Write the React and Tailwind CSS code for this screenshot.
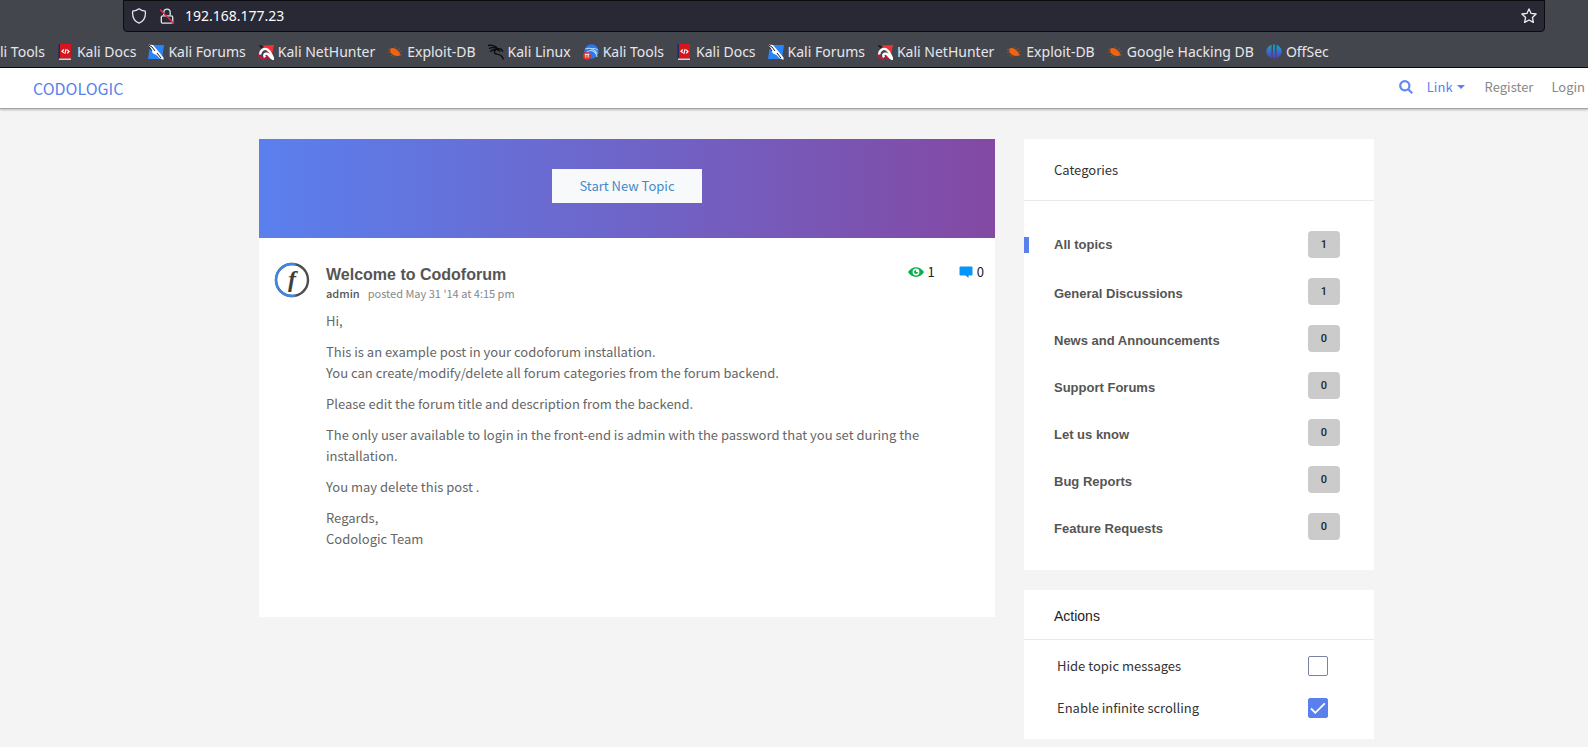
import React from 'react';

const bookmarks = [
  { label: 'Kali Docs', icon: 'docs' },
  { label: 'Kali Forums', icon: 'forums' },
  { label: 'Kali NetHunter', icon: 'nethunter' },
  { label: 'Exploit-DB', icon: 'exploit' },
  { label: 'Kali Linux', icon: 'linux' },
  { label: 'Kali Tools', icon: 'tools' },
  { label: 'Kali Docs', icon: 'docs' },
  { label: 'Kali Forums', icon: 'forums' },
  { label: 'Kali NetHunter', icon: 'nethunter' },
  { label: 'Exploit-DB', icon: 'exploit' },
  { label: 'Google Hacking DB', icon: 'exploit' },
  { label: 'OffSec', icon: 'offsec' },
];

const categories = [
  { name: 'General Discussions', count: 1 },
  { name: 'News and Announcements', count: 0 },
  { name: 'Support Forums', count: 0 },
  { name: 'Let us know', count: 0 },
  { name: 'Bug Reports', count: 0 },
  { name: 'Feature Requests', count: 0 },
];

const icons = {
  docs: (
    <>
      <path d="M1.500 0h2.500v14.500H1.500z" fill="#1b2a63" />
      <path d="M3 0h11v14.500H3z" fill="#d9141b" />
      <path d="M2 14.500h12V16H2z" fill="#e6c9c9" />
      <path d="M6.800 5.500 5 7.200l1.800 1.600M10.200 5.800l1.800 1.700-1.800 1.800M9.200 5 7.800 9.800" stroke="#fff" strokeWidth="1.200" fill="none" />
    </>
  ),
  forums: (
    <>
      <path d="M5 1h11l-2 14H0L1.500 5z" fill="#2b84f7" />
      <path d="M0 0.500 5 1l6 7 4.500 5.500V16l-4-2L8.500 11 5 9.500z" fill="#fff" />
      <path d="M0 0.500 4 3l3 4M1 2.500 4 7M9 9l4 5" stroke="#1c1c22" strokeWidth="1" fill="none" />
    </>
  ),
  nethunter: (
    <>
      <path d="M5 1.500 16 1l-2.500 12L8 6z" fill="#ef3236" />
      <path d="M0.500 1 5 2 3.500 4.500z" fill="#1c1418" />
      <path d="M0.500 9c.5 3.500 3 6 7 6.300M8.500 11.500l3 3.500" fill="none" stroke="#c8143f" strokeWidth="2.200" />
      <path d="M2.500 10.500C1.500 7 6 3.500 9.500 5.500c3 1.800 3.500 5 6 9.500-3.500-.8-4-4.800-6.500-5.300-2.200-.4-3.500 1.300-2 3.600" fill="none" stroke="#fff" strokeWidth="2.400" />
    </>
  ),
  exploit: (
    <>
      <path d="M3.500 4.500C6 3 9 4.500 11 7c1.500 1.500 2.500 2.500 2.500 4.500-3 1-6.500.5-8.500-1.500-1.800-1.600-2.500-3.500-1.500-5.500z" fill="#f0640f" />
      <path d="M1 5.500h3M1 8.500l3-.5M3 12l3-1.500M6 13l2-2M7 4.500 9 3M10 6l3-1.500M12 8l3-1M12.500 10.500l2.500.5" stroke="#a5501e" strokeWidth="0.800" fill="none" />
    </>
  ),
  linux: (
    <path
      d="M0 1.500c4-1 7 .5 9.500 2.500M1 4.500c3-1.500 6-.8 8.500.5M2 7.500c2-1.500 4-2 7-2l3.500 2M9 5.500c-3.500 1.500-3.500 4 0 4.700 3.500.6 5.500 1.500 6.500 5.300M9.500 4.500 13 5l2 2.500"
      stroke="#0b0b0e"
      strokeWidth="1.300"
      fill="none"
    />
  ),
  tools: (
    <>
      <circle cx="8.500" cy="7.500" r="7.200" fill="#2779f3" />
      <path d="M2.500 5C7 3 11 5 14.500 9.500M4 8c3-2.200 6-1.500 8 .5 1.500 1.500 2 3 2 4.500M8 5c3-1 5-.5 6.500 1" stroke="#b9d8ff" strokeWidth="1.100" fill="none" />
      <circle cx="4" cy="11.800" r="3.900" fill="#e8342c" />
      <path d="M2.800 10v3.600M5.200 10v3.600M1.800 10.300h4.600" stroke="#fff" strokeWidth="0.900" fill="none" />
    </>
  ),
  offsec: (
    <>
      <defs>
        <linearGradient id="offsec" x1="0" y1="0" x2="0" y2="1">
          <stop offset="0" stopColor="#16a6c4" />
          <stop offset="1" stopColor="#5a2fd0" />
        </linearGradient>
      </defs>
      <path d="M5.500 0.800v13.400C-1.500 11-1.500 4 5.500 0.800zM10.500 0.800v13.400C17.500 11 17.500 4 10.500 0.800zM7.200 0.500h1.600l.7 12L8 16l-1.500-3.500z" fill="url(#offsec)" />
    </>
  ),
};

const Bookmark = ({ label, icon }) => (
  <a href="#" className="flex shrink-0 items-center gap-1 whitespace-nowrap">
    <svg viewBox="0 0 16 16" className="h-4 w-4 shrink-0">
      {icons[icon]}
    </svg>
    {label}
  </a>
);

const BrowserBar = () => (
  <div className="border-b border-[#0c0c0f] bg-[#44464e] font-['Noto_Sans',sans-serif] text-[#fbfbfe]">
    <div className="pl-[123px] pr-[43px]">
      <div className="flex h-8 items-center rounded-b border border-[#0c0c0f] bg-[#282934] px-[7px]">
        <svg viewBox="0 0 16 16" className="h-4 w-4" fill="none" stroke="#e4e4e9" strokeWidth="1.300">
          <path d="M8 0.800c1.800 1.500 4 2.200 6.300 2.400.6 5.500-1 9.800-6.300 12C2.700 13 1.100 8.700 1.700 3.200 4 3 6.200 2.300 8 0.800z" strokeLinejoin="round" />
        </svg>
        <svg viewBox="0 0 16 16" className="ml-3 h-4 w-4" fill="none" stroke="#e4e4e9" strokeWidth="1.300">
          <path d="M4.800 7V4.300a3.200 3.200 0 0 1 6.400 0V7" />
          <rect x="2.300" y="7.800" width="11.400" height="7.400" rx="1.500" />
          <path d="M1 1.500l14 14" stroke="#e22850" strokeWidth="1.400" />
        </svg>
        <input
          type="text"
          aria-label="Address"
          defaultValue="192.168.177.23"
          className="ml-2.5 min-w-0 flex-1 bg-transparent text-sm outline-none"
        />
        <button aria-label="Bookmark this page">
          <svg viewBox="0 0 16 16" className="h-4 w-4" fill="none" stroke="#f0f0f4" strokeWidth="1.300" strokeLinejoin="round">
            <path d="M8 0.900l2.100 4.500 5 .6-3.700 3.400 1 5L8 12l-4.400 2.400 1-5L.9 6l5-.6z" />
          </svg>
        </button>
      </div>
    </div>
    <nav className="flex h-[35px] items-center gap-3 overflow-hidden pt-1 text-sm text-[#e6e6ea]">
      <a href="#" className="shrink-0 whitespace-nowrap">li Tools</a>
      {bookmarks.map((b, i) => (
        <Bookmark key={i} {...b} />
      ))}
    </nav>
  </div>
);

const SiteHeader = () => (
  <header className="flex h-[41px] items-center border-b border-[#a6a6a6] bg-white pl-[33px] pr-[3px] shadow-[0_1px_2px_rgba(0,0,0,0.25)]">
    <a href="#" className="text-base text-[#5a80ee]">
      CODOLOGIC
    </a>
    <nav className="ml-auto flex items-center pb-0.5 text-[13px] text-[#888]">
      <button aria-label="Search" className="mr-3.5">
        <svg viewBox="0 0 14 14" className="h-3.5 w-3.5" fill="none" stroke="#6488ef" strokeWidth="2.200">
          <circle cx="5.800" cy="5.800" r="4.600" />
          <path d="M9 9l4.200 4.200" />
        </svg>
      </button>
      <button className="mr-5 flex items-center gap-1 text-[#5a80ee]">
        Link
        <svg viewBox="0 0 8 4" className="h-1 w-2" fill="#5a80ee">
          <path d="M0 0h8L4 4z" />
        </svg>
      </button>
      <a href="#" className="mr-[18px]">Register</a>
      <a href="#">Login</a>
    </nav>
  </header>
);

const Avatar = () => (
  <svg viewBox="0 0 36 36" className="h-9 w-9 shrink-0" role="img" aria-label="admin">
    <circle cx="18" cy="18" r="16" fill="#fff" stroke="#4d4d4f" strokeWidth="2.400" />
    <path d="M21.500 2.400A16 16 0 1 0 21.500 33.600" fill="none" stroke="#3f86e4" strokeWidth="2.400" />
    <text x="18" y="25" textAnchor="middle" fill="#3f3f41" className="font-['Liberation_Serif',serif] text-2xl font-bold italic">
      f
    </text>
  </svg>
);

const Topic = () => (
  <article className="flex items-start gap-4 pb-[68px] pl-[15px] pr-[11px] pt-6">
    <Avatar />
    <div className="min-w-0 flex-1">
      <div className="flex items-start">
        <h2 className="flex-1 pt-[3px] font-['Liberation_Sans',sans-serif] text-base leading-5 font-bold text-[#555]">
          Welcome to Codoforum
        </h2>
        <div className="flex items-center gap-6 text-[13px] leading-5 text-[#222]">
          <span className="flex items-center gap-1">
            <svg viewBox="0 0 16 10" className="h-2.5 w-4">
              <path d="M0 5C4-1.500 12-1.500 16 5 12 11.500 4 11.500 0 5z" fill="#07b04a" />
              <circle cx="8" cy="5" r="3.400" fill="#fff" />
              <circle cx="8" cy="5" r="2" fill="#07b04a" />
              <path d="M8 5V3h2v2z" fill="#fff" />
            </svg>
            1
          </span>
          <span className="flex items-center gap-1">
            <svg viewBox="0 0 14 12" className="h-3 w-3.5">
              <path d="M1.500 0.500h11a1 1 0 0 1 1 1v7a1 1 0 0 1-1 1H9.500V12L6.500 9.500h-5a1 1 0 0 1-1-1v-7a1 1 0 0 1 1-1z" fill="#0497f7" />
            </svg>
            0
          </span>
        </div>
      </div>
      <p className="flex gap-2 text-[11px] leading-4 text-[#888]">
        <a href="#" className="font-medium text-[#555]">admin</a>
        <span>posted May 31 '14 at 4:15 pm</span>
      </p>
      <div className="mt-[9px] mr-10 space-y-2.5 text-[13px] leading-[21px] text-[#666]">
        <p>Hi,</p>
        <p>
          This is an example post in your codoforum installation.
          <br />
          You can create/modify/delete all forum categories from the forum backend.
        </p>
        <p>Please edit the forum title and description from the backend.</p>
        <p>The only user available to login in the front-end is admin with the password that you set during the installation.</p>
        <p>You may delete this post .</p>
        <p>
          Regards,
          <br />
          Codologic Team
        </p>
      </div>
    </div>
  </article>
);

const Count = ({ children }) => (
  <span className="flex h-[27px] w-8 items-center justify-center rounded-sm bg-[#cbcbcb] pt-px font-[Roboto,sans-serif] text-[11px] font-medium text-[#222]">
    {children}
  </span>
);

const Categories = () => (
  <section className="bg-white pb-[30px]">
    <h3 className="border-b border-[#e9eaeb] px-[30px] py-5 text-[13px] leading-[21px] text-[#333]">Categories</h3>
    <ul className="space-y-5 pt-[30px] font-['Liberation_Sans',sans-serif] text-[13px] font-bold text-[#555]">
      <li className="flex items-center pr-[34px]">
        <span className="h-4 w-[5px] bg-[#5a80ee]" />
        <a href="#" className="flex-1 pl-[25px]">All topics</a>
        <Count>1</Count>
      </li>
      {categories.map((c) => (
        <li key={c.name} className="flex items-center pl-[30px] pr-[34px]">
          <a href="#" className="flex-1 pt-1">{c.name}</a>
          <Count>{c.count}</Count>
        </li>
      ))}
    </ul>
  </section>
);

const Toggle = ({ id, label, checked }) => (
  <div className="flex items-center justify-between">
    <label htmlFor={id}>{label}</label>
    <span className="relative h-5 w-5">
      <input
        id={id}
        type="checkbox"
        defaultChecked={checked}
        className="peer block h-5 w-5 appearance-none rounded-xs border border-[#7b80a5] bg-white checked:border-[#5a80ee] checked:bg-[#5a80ee]"
      />
      <svg viewBox="0 0 20 20" className="pointer-events-none absolute inset-0 hidden h-5 w-5 peer-checked:block" fill="none" stroke="#fff" strokeWidth="1.800">
        <path d="M3 10.500l4.300 4.300L16.800 5.300" />
      </svg>
    </span>
  </div>
);

const Actions = () => (
  <section className="bg-white pb-[21px]">
    <h3 className="border-b border-[#e9eaeb] px-[30px] pt-4 pb-3 font-['Liberation_Sans',sans-serif] text-sm leading-[21px] text-[#222]">
      Actions
    </h3>
    <div className="space-y-[22px] pl-[33px] pr-[46px] pt-4 text-[13px] leading-5 text-[#333]">
      <Toggle id="hide-messages" label="Hide topic messages" />
      <Toggle id="infinite-scroll" label="Enable infinite scrolling" checked />
    </div>
  </section>
);

const App = () => {
  return (
    <div className="min-h-screen overflow-hidden bg-[#f4f4f4] font-['Noto_Sans_CJK_SC',sans-serif]">
      <BrowserBar />
      <SiteHeader />
      <div className="flex items-start gap-[29px] pl-[259px] pr-[214px] pt-[30px] pb-2">
        <main className="min-w-0 flex-1 bg-white">
          <div className="flex justify-center bg-linear-to-r/srgb from-[#5a80ee] to-[#8349a3] pt-[30px] pb-[35px]">
            <button className="h-[34px] w-[150px] bg-[#f8f9fb] text-[13px] text-[#428bca]">Start New Topic</button>
          </div>
          <Topic />
        </main>
        <aside className="w-[350px] shrink-0 space-y-5">
          <Categories />
          <Actions />
        </aside>
      </div>
    </div>
  );
};

export default App;
